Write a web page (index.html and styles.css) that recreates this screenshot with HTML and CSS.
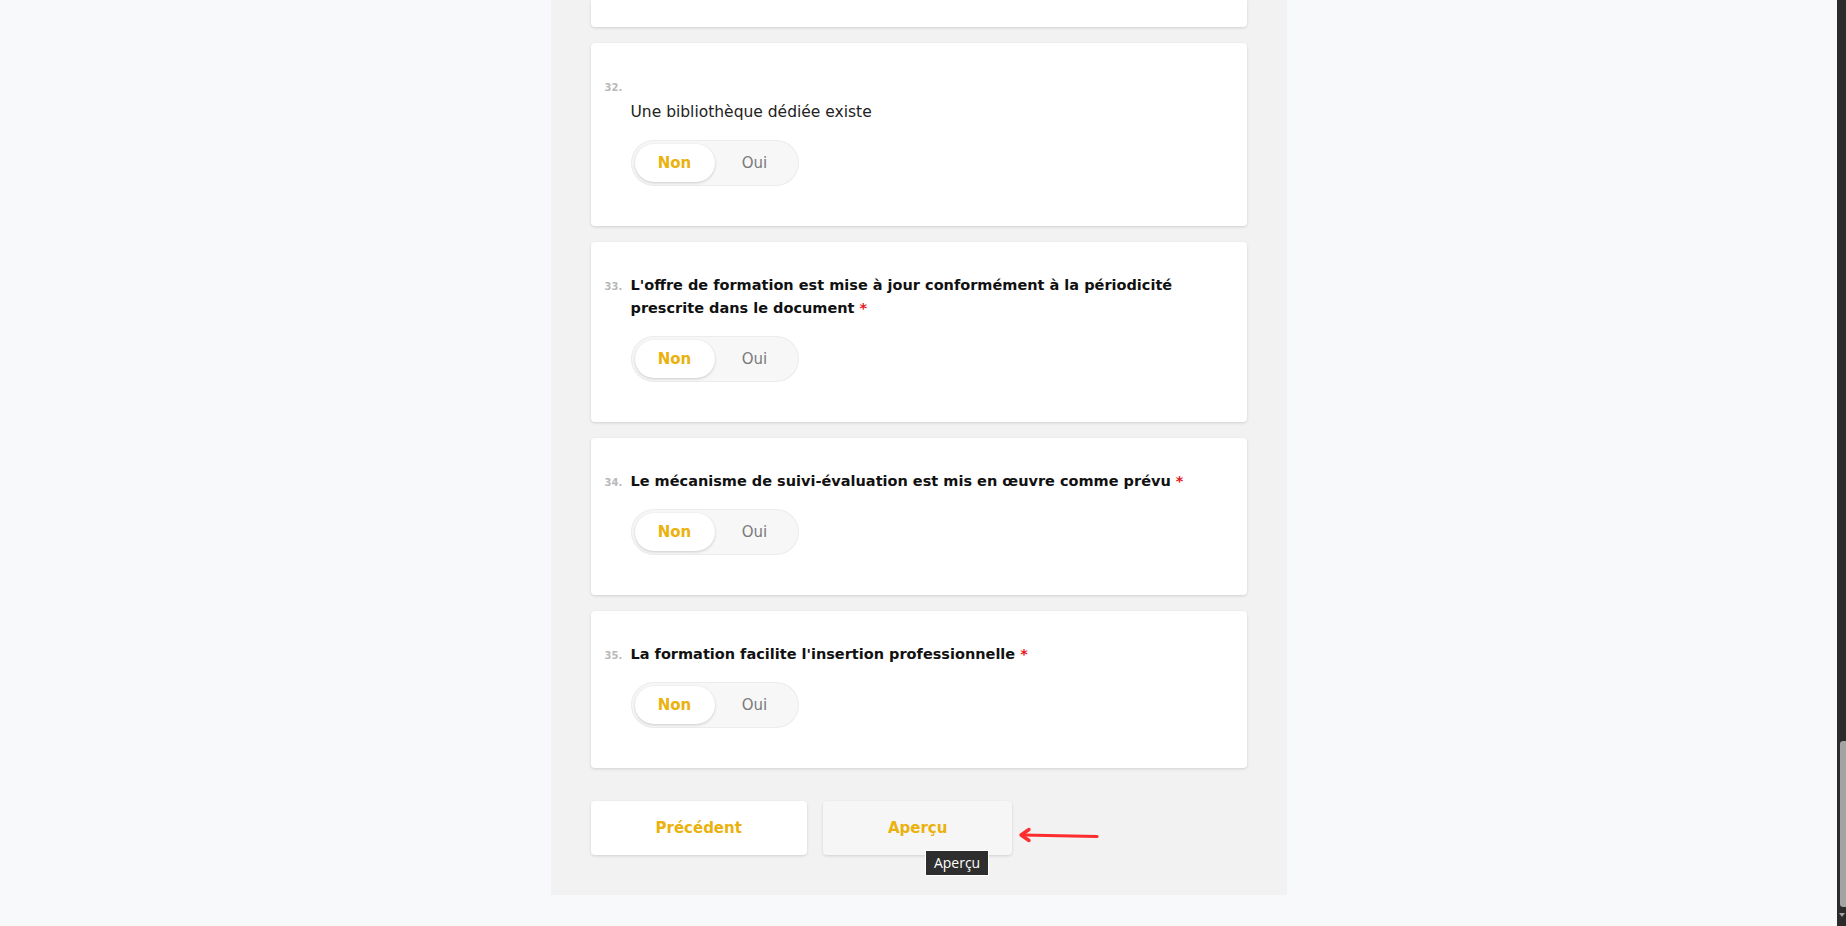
FILE: index.html
```html
<!DOCTYPE html>
<html lang="fr">
<head>
    <meta charset="UTF-8">
    <meta name="viewport" content="width=device-width, initial-scale=1.0">
    <title>Questionnaire</title>
    <link rel="stylesheet" href="styles.css">
</head>
<body>
    <div class="page">
        <form class="survey">
            <div class="card card-tail"></div>

            <div class="card">
                <span class="num">32.</span>
                <div class="title">&nbsp;</div>
                <p class="desc">Une bibliothèque dédiée existe</p>
                <div class="toggle">
                    <span class="opt active">Non</span>
                    <span class="opt">Oui</span>
                </div>
            </div>

            <div class="card">
                <span class="num">33.</span>
                <div class="title">L'offre de formation est mise à jour conformément à la périodicité prescrite dans le document&nbsp;<span class="req">*</span></div>
                <div class="toggle">
                    <span class="opt active">Non</span>
                    <span class="opt">Oui</span>
                </div>
            </div>

            <div class="card">
                <span class="num">34.</span>
                <div class="title">Le mécanisme de suivi-évaluation est mis en œuvre comme prévu&nbsp;<span class="req">*</span></div>
                <div class="toggle">
                    <span class="opt active">Non</span>
                    <span class="opt">Oui</span>
                </div>
            </div>

            <div class="card">
                <span class="num">35.</span>
                <div class="title">La formation facilite l'insertion professionnelle&nbsp;<span class="req">*</span></div>
                <div class="toggle">
                    <span class="opt active">Non</span>
                    <span class="opt">Oui</span>
                </div>
            </div>

            <div class="actions">
                <button type="button" class="btn">Précédent</button>
                <div class="btn-wrap">
                    <button type="button" class="btn hover">Aperçu</button>
                    <span class="tooltip">Aperçu</span>
                    <svg class="pointer" width="84" height="16" viewBox="0 0 84 16">
                        <path d="M80 9.5 L6 8" stroke="#ff2d2d" stroke-width="3.2" stroke-linecap="round" fill="none"/>
                        <path d="M12 2.5 L4 8 L12 13.5" stroke="#ff2d2d" stroke-width="3.4" stroke-linecap="round" stroke-linejoin="round" fill="none"/>
                    </svg>
                </div>
            </div>
        </form>
    </div>

    <div class="scrollbar">
        <div class="thumb"></div>
        <span class="arrow-down"></span>
    </div>
</body>
</html>
```

FILE: styles.css
```css
* {
    box-sizing: border-box;
}

body {
    margin: 0;
    background-color: #f8f9fb;
    font-family: "DejaVu Sans", "Open Sans", sans-serif;
    color: #111;
    height: 926px;
    overflow: hidden;
}

.page {
    width: calc(100% - 9px);
}

.survey {
    width: 736px;
    margin: 0 auto;
    background-color: #f2f2f2;
    padding: 0 40px 40px;
}

.card {
    display: grid;
    grid-template-columns: 26px 1fr;
    align-items: baseline;
    background-color: #fff;
    border-radius: 4px;
    box-shadow: 0 1px 3px rgba(0, 0, 0, 0.14);
    padding: 32px 40px 40px 14px;
    margin-bottom: 16px;
}

.card-tail {
    height: 27px;
    padding: 0;
    border-radius: 0 0 4px 4px;
}

.num {
    grid-column: 1;
    font-size: 10px;
    font-weight: bold;
    color: #b8b8b8;
}

.title {
    grid-column: 2;
    min-height: 23px;
    font-size: 14.5px;
    line-height: 23px;
    font-weight: bold;
    color: #111;
}

.req {
    color: #e8161b;
}

.desc {
    grid-column: 2;
    margin: 3px 0 0;
    font-size: 15.5px;
    line-height: 23px;
    color: #222;
}

.toggle {
    grid-column: 2;
    justify-self: start;
    display: flex;
    margin-top: 16px;
    padding: 4px;
    width: 168px;
    height: 46px;
    border-radius: 23px;
    background-color: #f7f7f7;
    box-shadow: inset 0 0 0 1px #ececec;
}

.opt {
    flex: 1;
    display: flex;
    align-items: center;
    justify-content: center;
    border-radius: 19px;
    font-size: 15px;
    color: #7a7a7a;
}

.opt.active {
    background-color: #fff;
    color: #ebb10c;
    font-weight: bold;
    box-shadow: 0 1px 3px rgba(0, 0, 0, 0.18);
}

.actions {
    display: flex;
    gap: 16px;
    margin-top: 33px;
}

.btn-wrap {
    position: relative;
}

.btn {
    height: 54px;
    padding: 0 65px;
    border: none;
    border-radius: 4px;
    background-color: #fff;
    box-shadow: 0 1px 3px rgba(0, 0, 0, 0.14);
    font-family: inherit;
    font-size: 15px;
    font-weight: bold;
    color: #ebb10c;
}

.btn.hover {
    background-color: #f6f6f6;
}

.tooltip {
    position: absolute;
    left: 102px;
    top: 49px;
    padding: 3px 8px;
    background-color: #2e2e2e;
    border: 1px solid #fff;
    color: #fff;
    font-family: "Open Sans", sans-serif;
    font-size: 14px;
    line-height: 18px;
    white-space: nowrap;
}

.pointer {
    position: absolute;
    left: calc(100% + 5px);
    top: 26px;
}

.scrollbar {
    position: fixed;
    top: 0;
    right: 0;
    width: 9px;
    height: 100%;
    background-color: #2b2b2b;
}

.thumb {
    position: absolute;
    top: 741px;
    right: 0;
    width: 6px;
    height: 166px;
    border-radius: 3px 0 0 3px;
    background-color: #a3a3a3;
}

.arrow-down {
    position: absolute;
    left: 2px;
    top: 913px;
    border-left: 3px solid transparent;
    border-right: 3px solid transparent;
    border-top: 4px solid #a3a3a3;
}
```
